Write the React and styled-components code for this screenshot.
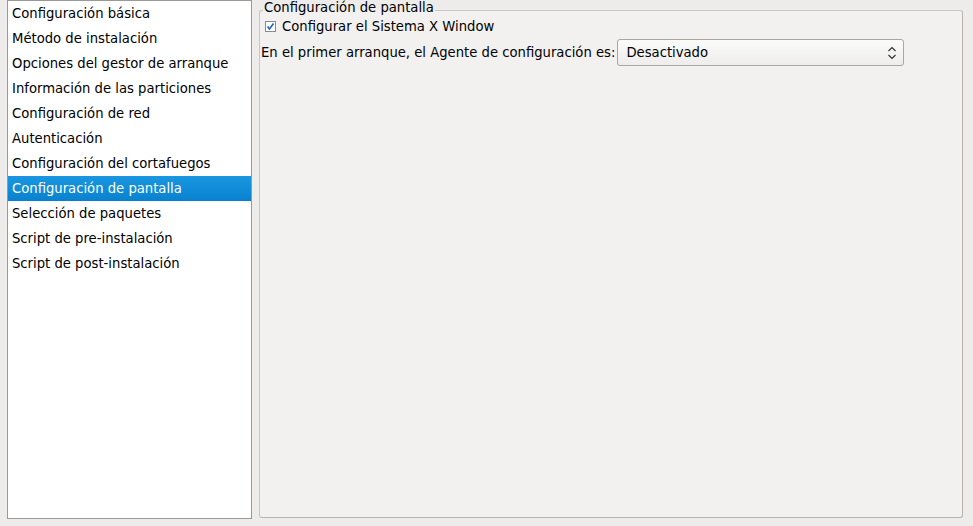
import React from "react";
import styled, { createGlobalStyle } from "styled-components";

const Global = createGlobalStyle`
  html, body { margin: 0; padding: 0; }
  body {
    background: #edeceb;
    font-family: "DejaVu Sans", "Liberation Sans", sans-serif;
    font-size: 13.2px;
    color: #000;
    width: 973px;
    height: 526px;
    overflow: hidden;
  }
`;

const Page = styled.div`
  display: flex;
  width: 973px;
  height: 526px;
  box-sizing: border-box;
  padding: 0 10px 7px 7px;
  gap: 7px;
`;

const List = styled.div`
  width: 245px;
  height: 519px;
  box-sizing: border-box;
  background: #fff;
  border: 1px solid #9c9895;
  display: flex;
  flex-direction: column;
`;

const Item = styled.div`
  height: 25px;
  line-height: 25px;
  padding-left: 4px;
  white-space: nowrap;
  color: ${(p) => (p.$selected ? "#fff" : "#000")};
  background: ${(p) =>
    p.$selected ? "linear-gradient(#1a97e0, #0882d0)" : "transparent"};
`;

const Frame = styled.fieldset`
  flex: 1;
  margin: 1px 0 0 0;
  padding: 0 0 0 1px;
  height: 517px;
  box-sizing: border-box;
  border: 1px solid #c9c6c3;
  border-right-color: #b6b3b0;
  border-bottom-color: #b6b3b0;
  border-radius: 3px;
  background: #f2f1f0;
  min-width: 0;
`;

const Legend = styled.legend`
  padding: 0 1px 4px 1px;
  margin-left: 2px;
  line-height: 14px;
`;

const CheckRow = styled.label`
  display: flex;
  align-items: center;
  height: 18px;
  margin-top: -2px;
  padding-left: 4px;
  gap: 6px;
`;

const Box = styled.span`
  width: 9px;
  height: 9px;
  border: 1px solid #8c8a88;
  background: #fff;
  position: relative;
  display: inline-block;
`;

const Row = styled.div`
  display: flex;
  align-items: center;
  margin-top: 4px;
  height: 27px;
`;

const Combo = styled.div`
  margin-left: 2px;
  width: 287px;
  height: 27px;
  box-sizing: border-box;
  border: 1px solid #a9a6a3;
  border-radius: 3px;
  background: linear-gradient(#fbfbfa, #eeedec);
  display: flex;
  align-items: center;
  justify-content: space-between;
  padding: 0 6px 0 8px;
`;

const items = [
  "Configuración básica",
  "Método de instalación",
  "Opciones del gestor de arranque",
  "Información de las particiones",
  "Configuración de red",
  "Autenticación",
  "Configuración del cortafuegos",
  "Configuración de pantalla",
  "Selección de paquetes",
  "Script de pre-instalación",
  "Script de post-instalación",
];

export default function App() {
  return (
    <>
      <Global />
      <Page>
        <List>
          {items.map((t, i) => (
            <Item key={t} $selected={i === 7}>
              {t}
            </Item>
          ))}
        </List>
        <Frame>
          <Legend>Configuración de pantalla</Legend>
          <CheckRow>
            <Box>
              <svg width="11" height="11" viewBox="0 0 11 11" style={{ position: "absolute", left: -1, top: -1 }}>
                <path d="M2.5 5.5 L4.5 8 L8.5 2.5" stroke="#1a5fd0" strokeWidth="1.6" fill="none" />
              </svg>
            </Box>
            Configurar el Sistema X Window
          </CheckRow>
          <Row>
            En el primer arranque, el Agente de configuración es:
            <Combo>
              <span>Desactivado</span>
              <svg width="10" height="14" viewBox="0 0 10 14">
                <path d="M1.5 5 L5 1.5 L8.5 5 M1.5 9 L5 12.5 L8.5 9" stroke="#333" strokeWidth="1.2" fill="none" />
              </svg>
            </Combo>
          </Row>
        </Frame>
      </Page>
    </>
  );
}
